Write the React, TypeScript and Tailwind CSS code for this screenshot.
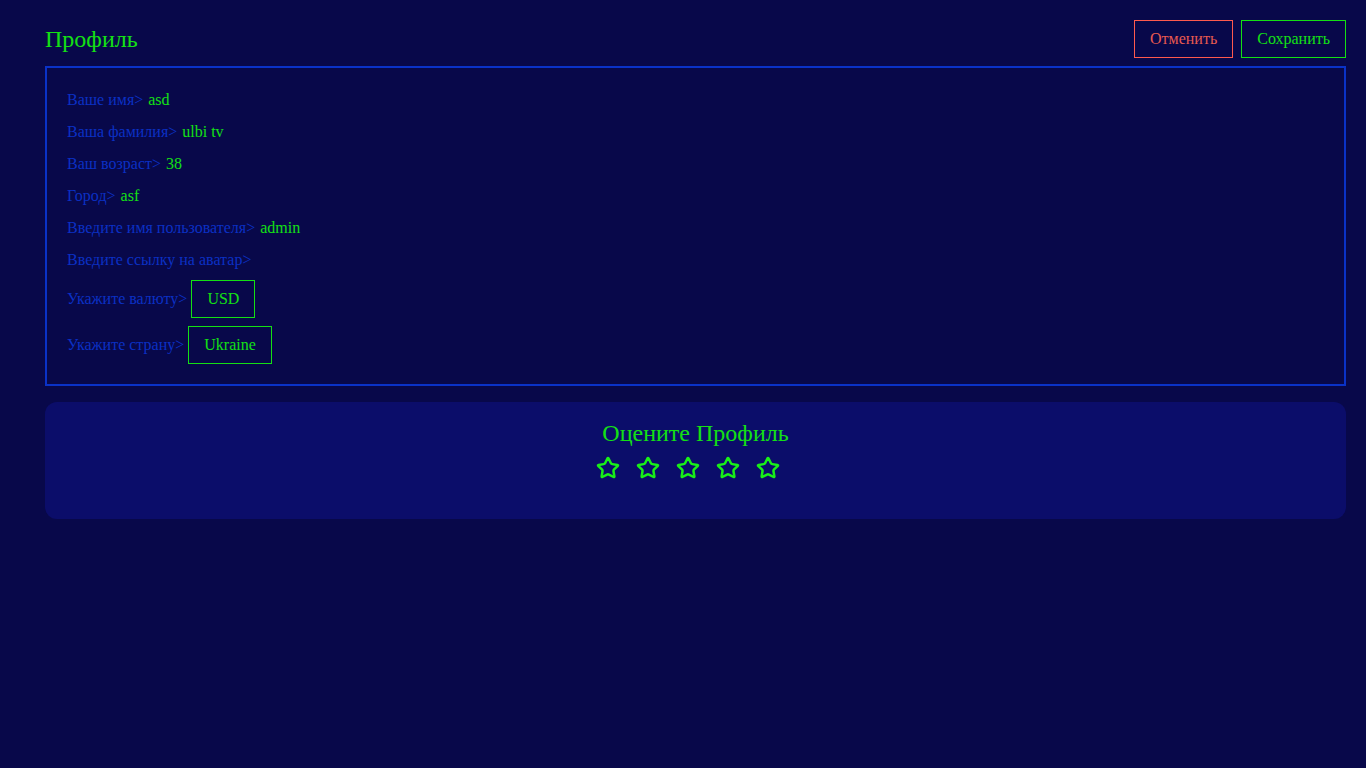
import { Star } from "lucide-react";

const fields = [
  { label: "Ваше имя>", value: "asd" },
  { label: "Ваша фамилия>", value: "ulbi tv" },
  { label: "Ваш возраст>", value: "38" },
  { label: "Город>", value: "asf" },
  { label: "Введите имя пользователя>", value: "admin" },
  { label: "Введите ссылку на аватар>", value: "" },
];

const selects = [
  { label: "Укажите валюту>", value: "USD" },
  { label: "Укажите страну>", value: "Ukraine" },
];

const App = () => {
  return (
    <div className="min-h-screen bg-[#08084a] pl-[45px] pr-[20px] pt-5 font-['Liberation_Serif',serif]">
      <div className="flex items-center justify-between h-[38px] mb-2">
        <h1 className="text-2xl text-[#14e014]">Профиль</h1>
        <div className="flex gap-2">
          <button className="h-[38px] px-[15px] border border-[#ff5a4e] text-[#e85a50] text-base">
            Отменить
          </button>
          <button className="h-[38px] px-[15px] border border-[#14e014] text-[#14e014] text-base">
            Сохранить
          </button>
        </div>
      </div>

      <div className="border-2 border-[#0a32c8] p-5 flex flex-col gap-2">
        {fields.map((f) => (
          <div key={f.label} className="h-6 flex items-center text-base">
            <span className="text-[#0b30c4]">{f.label}</span>
            {f.value && (
              <span className="text-[#14e014] ml-[5px]">{f.value}</span>
            )}
          </div>
        ))}
        {selects.map((s) => (
          <div key={s.label} className="flex items-center gap-1 text-base">
            <span className="text-[#0b30c4]">{s.label}</span>
            <div className="h-[38px] px-[15px] flex items-center border border-[#14e014] text-[#14e014]">
              {s.value}
            </div>
          </div>
        ))}
      </div>

      <div className="mt-4 bg-[#0b0d6a] rounded-xl pt-4 pb-[39px] flex flex-col items-center">
        <h2 className="text-2xl leading-[30px] text-[#14e014]">Оцените Профиль</h2>
        <div className="flex mt-2">
          {[0, 1, 2, 3, 4].map((i) => (
            <Star key={i} size={24} strokeWidth={2.5} className="text-[#19f019] mr-4" />
          ))}
        </div>
      </div>
    </div>
  );
};

export default App;
